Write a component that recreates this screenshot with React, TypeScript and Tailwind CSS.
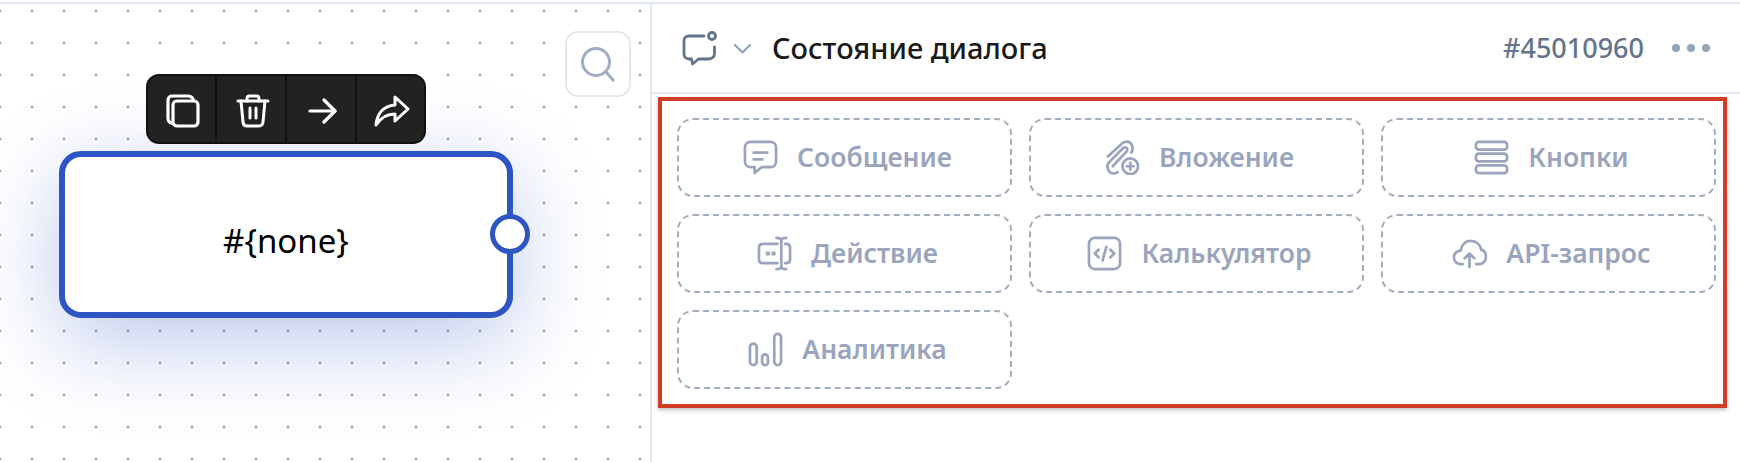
import type { ReactNode } from "react";

const sans = "font-['Noto_Sans',sans-serif]";

function ToolButton({ children, className }: { children: ReactNode; className: string }) {
  return <div className={`flex items-center justify-center pl-[3px] pt-[4px] ${className}`}>{children}</div>;
}

function Toolbar() {
  return (
    <div className="absolute left-[146px] top-[70px] z-10 flex h-[70px] w-[280px] overflow-hidden rounded-[13px] border-2 border-[#111111] bg-[#222222] text-white">
      <ToolButton className="w-[67px] shrink-0">
        <svg width="34" height="34" viewBox="0 0 34 34" fill="none" stroke="currentColor" strokeWidth="3.2" strokeLinejoin="round">
          <rect x="7" y="7" width="25" height="25" rx="4" />
          <path d="M7 29.5C3.8 29 2 27 2 24V6c0-2.500 2-4 4-4h16c3 0 5 2 5.500 5" />
        </svg>
      </ToolButton>
      <ToolButton className="w-[70px] shrink-0 border-l-2 border-[#111111]">
        <svg width="34" height="34" viewBox="0 0 34 34" fill="none" stroke="currentColor" strokeWidth="3" strokeLinecap="round" strokeLinejoin="round">
          <path d="M2 7h30" />
          <path d="M11 7V4.500C11 3 12 2 13.500 2h7C22 2 23 3 23 4.500V7" />
          <path d="M5 7l2 21c.2 2.500 1.800 4 4 4h12c2.200 0 3.800-1.500 4-4l2-21" />
          <path d="M14 14v10M20 14v10" />
        </svg>
      </ToolButton>
      <ToolButton className="w-[70px] shrink-0 border-l-2 border-[#111111]">
        <svg width="30" height="26" viewBox="0 0 30 26" fill="none" stroke="currentColor" strokeWidth="3.200" strokeLinecap="round" strokeLinejoin="round">
          <path d="M2 13h25" />
          <path d="M16 2l11 11-11 11" />
        </svg>
      </ToolButton>
      <ToolButton className="flex-1 border-l-2 border-[#111111]">
        <svg width="36" height="32" viewBox="0 0 36 32" fill="none" stroke="currentColor" strokeWidth="3" strokeLinejoin="round" strokeLinecap="round">
          <path d="M21 2l13 12-13 12v-7c-8 0-14 3-19 11 1-11 7-19 19-20z" />
        </svg>
      </ToolButton>
    </div>
  );
}

function Canvas() {
  return (
    <div className="relative h-full w-[650px] shrink-0 overflow-hidden bg-white bg-[radial-gradient(#a0a0a0_1.5px,transparent_1.6px)] bg-[position:-16px_-9px] bg-[size:32px_32px]">
      <div className="absolute left-[565px] top-[27px] flex h-[66px] w-[66px] items-center justify-center rounded-[13px] border-2 border-[#e2e8f0] bg-white text-[#a0aec0]">
        <svg width="36" height="36" viewBox="0 0 36 36" fill="none" stroke="currentColor" strokeWidth="3" strokeLinecap="round">
          <circle cx="16" cy="16" r="13.500" />
          <path d="M26 26l7 8" />
        </svg>
      </div>
      <Toolbar />
      <div className={`absolute left-[59px] top-[147px] flex h-[167px] w-[454px] items-center justify-center rounded-[22px] border-[6px] border-[#2d55c4] bg-white pt-[13px] text-[33px] text-black shadow-[0_24px_90px_rgba(45,85,196,0.32)] ${sans}`}>
        #{"{"}none{"}"}
      </div>
      <div className="absolute left-[490px] top-[210px] h-[40px] w-[40px] rounded-full border-[5px] border-[#2d55c4] bg-white" />
    </div>
  );
}

function Header() {
  return (
    <div className="flex h-[90px] items-center border-b-2 border-[#e2e8f0] pl-[30px] pr-[30px]">
      <svg width="36" height="35" viewBox="0 0 36 35" fill="none" stroke="#64748b" strokeWidth="2.800" strokeLinecap="round" strokeLinejoin="round">
        <path d="M22 5H7C3.500 5 2 7 2 10v13c0 3 2 5 5 5h2.500l1 5 6-5h10c3 0 6-2 6-5v-7" />
        <circle cx="30" cy="5" r="3.500" />
      </svg>
      <svg className="ml-[15px]" width="19" height="11" viewBox="0 0 19 11" fill="none" stroke="#94a3b8" strokeWidth="2.200" strokeLinecap="round" strokeLinejoin="round">
        <path d="M2 2l7.500 7.500L17 2" />
      </svg>
      <div className={`ml-[20px] text-[29px] font-medium text-[#1a1a1a] ${sans}`}>Состояние диалога</div>
      <div className={`ml-auto text-[27px] font-medium text-[#64748b] ${sans}`}>#45010960</div>
      <div className="ml-[28px] flex gap-[7px]">
        <span className="h-[8px] w-[8px] rounded-full bg-[#94a3b8]" />
        <span className="h-[8px] w-[8px] rounded-full bg-[#94a3b8]" />
        <span className="h-[8px] w-[8px] rounded-full bg-[#94a3b8]" />
      </div>
    </div>
  );
}

const icon = {
  fill: "none",
  stroke: "#9aa5bd",
  strokeWidth: 2.800,
  strokeLinecap: "round" as const,
  strokeLinejoin: "round" as const,
  width: 35,
  height: 35,
  viewBox: "0 0 36 36",
};

const items: { label: string; icon: ReactNode }[] = [
  {
    label: "Сообщение",
    icon: (
      <svg {...icon}>
        <path d="M8 2h20c3.500 0 6 2.500 6 6v14c0 3.500-2.500 6-6 6H19l-7 6v-6H8c-3.500 0-6-2.500-6-6V8c0-3.500 2.500-6 6-6z" />
        <path d="M11 13h14M11 20h9" />
      </svg>
    ),
  },
  {
    label: "Вложение",
    icon: (
      <svg {...icon}>
        <path d="M3 17L17 4c3-3 8-3 10 0s2 6 0 9" />
        <path d="M8 27L22 12c2-2 0-6-3-4L5 22c-3 3-3 7-1 10s6 3 9 1" />
        <circle cx="26" cy="27" r="8" />
        <path d="M26 23.500v7M22.500 27h7" />
      </svg>
    ),
  },
  {
    label: "Кнопки",
    icon: (
      <svg {...icon}>
        <rect x="2" y="2" width="32" height="8" rx="3" />
        <rect x="2" y="14" width="32" height="8" rx="3" />
        <rect x="2" y="26" width="32" height="8" rx="3" />
      </svg>
    ),
  },
  {
    label: "Действие",
    icon: (
      <svg {...icon}>
        <path d="M21 8H6c-2.500 0-4 1.500-4 4v12c0 2.500 1.500 4 4 4h15" />
        <path d="M29 8h1c3 0 4 1.500 4 4v12c0 2.500-1 4-4 4h-1" />
        <path d="M25 5v26M20 2c3 0 5 1 5 3 0-2 2-3 5-3M20 34c3 0 5-1 5-3 0 2 2 3 5 3" />
        <circle cx="11" cy="18" r="1" />
        <circle cx="17" cy="18" r="1" />
      </svg>
    ),
  },
  {
    label: "Калькулятор",
    icon: (
      <svg {...icon}>
        <rect x="2" y="2" width="32" height="32" rx="6" />
        <path d="M12 14l-4 4 4 4M24 14l4 4-4 4M20 11l-4 14" />
      </svg>
    ),
  },
  {
    label: "API-запрос",
    icon: (
      <svg {...icon}>
        <path d="M11 29H9C5 29 2 26 2 22c0-4 3-7 7-7 1-6 5-10 10-10 6 0 10 4 11 9 3 1 5 4 5 7 0 4-3 8-7 8h-3" />
        <path d="M18 32V19M13 23l5-5 5 5" />
      </svg>
    ),
  },
  {
    label: "Аналитика",
    icon: (
      <svg {...icon}>
        <rect x="2" y="12" width="7" height="22" rx="3.500" />
        <rect x="14.500" y="23" width="6" height="11" rx="3" />
        <rect x="27" y="2" width="7" height="32" rx="3.500" />
      </svg>
    ),
  },
];

function Blocks() {
  return (
    <div className="ml-[6px] mr-[13px] mt-[3px] grid grid-cols-3 content-start gap-x-[17px] gap-y-[17px] border-4 border-[#d13c26] pb-[15px] pl-[15px] pr-[7px] pt-[17px] shadow-[0_2px_4px_rgba(0,0,0,0.25)]">
      {items.map((item) => (
        <div
          key={item.label}
          className={`flex h-[79px] items-center justify-center gap-[19px] rounded-[16px] border-2 border-dashed border-[#a0aec0] pl-[6px] text-[26.5px] font-semibold text-[#9aa5bd] ${sans}`}
        >
          {item.icon}
          <span>{item.label}</span>
        </div>
      ))}
    </div>
  );
}

export default function App() {
  return (
    <div className="flex h-[462px] w-[1740px] flex-col overflow-hidden bg-white">
      <div className="h-[2px] bg-white" />
      <div className="flex min-h-0 flex-1 border-t-2 border-[#e2e8f0]">
        <Canvas />
        <div className="min-w-0 flex-1 border-l-2 border-[#e2e8f0]">
          <Header />
          <Blocks />
        </div>
      </div>
    </div>
  );
}
